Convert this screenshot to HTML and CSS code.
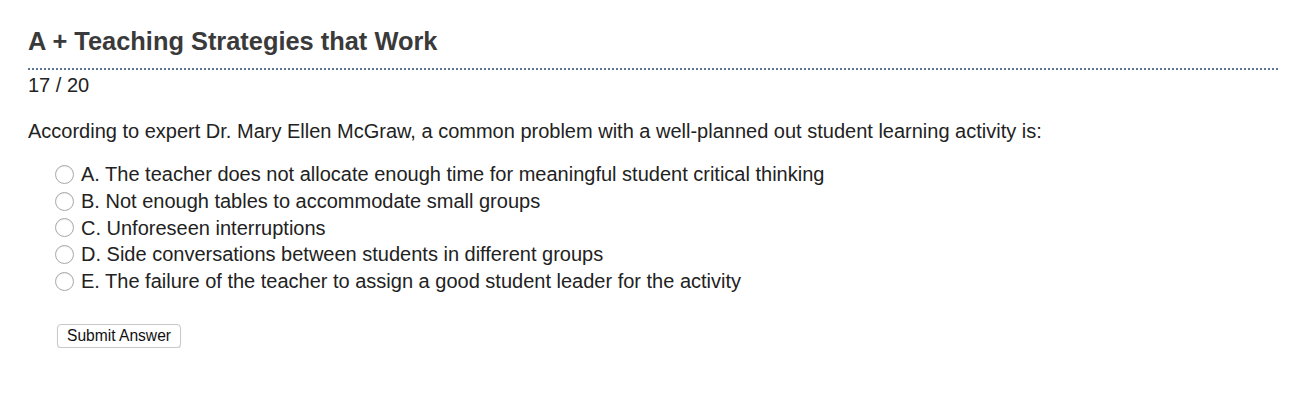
FILE: index.html
```html
<!DOCTYPE html>
<html lang="en">
<head>
    <meta charset="UTF-8">
    <title>A + Teaching Strategies that Work</title>
    <link rel="stylesheet" href="styles.css">
</head>
<body>
    <div class="quiz">
        <h1 class="quiz-title">A + Teaching Strategies that Work</h1>
        <div class="progress">17 / 20</div>
        <p class="question">According to expert Dr. Mary Ellen McGraw, a common problem with a well-planned out student learning activity is:</p>
        <ul class="choices">
            <li><label><span class="radio"></span>A. The teacher does not allocate enough time for meaningful student critical thinking</label></li>
            <li><label><span class="radio"></span>B. Not enough tables to accommodate small groups</label></li>
            <li><label><span class="radio"></span>C. Unforeseen interruptions</label></li>
            <li><label><span class="radio"></span>D. Side conversations between students in different groups</label></li>
            <li><label><span class="radio"></span>E. The failure of the teacher to assign a good student leader for the activity</label></li>
        </ul>
        <button class="submit-btn">Submit Answer</button>
    </div>
</body>
</html>
```

FILE: styles.css
```css
body {
    font-family: 'Liberation Sans', Arial, sans-serif;
    margin: 0;
    padding: 0;
    background: white;
    color: #222;
}
.quiz {
    padding: 26px 22px 0 28px;
}
.quiz-title {
    font-size: 25.4px;
    font-weight: bold;
    color: #3a3a3a;
    margin: 0;
    line-height: 30px;
    padding-bottom: 12px;
    border-bottom: 2px dotted #5a7894;
}
.progress {
    font-size: 20px;
    line-height: 24px;
    margin-top: 3px;
}
.question {
    font-size: 20px;
    line-height: 24px;
    margin: 22px 0 18px 0;
}
.choices {
    list-style: none;
    margin: 0;
    padding: 0 0 0 27px;
}
.choices li {
    font-size: 20px;
    line-height: 26.75px;
}
.choices li:first-child {
    margin-top: 2px;
}
.choices label {
    display: flex;
    align-items: center;
}
.radio {
    width: 17px;
    height: 17px;
    border: 1px solid #a8a8a8;
    border-radius: 50%;
    margin-right: 7px;
    box-shadow: inset 0 1px 1px rgba(0, 0, 0, 0.08);
}
.submit-btn {
    margin: 29px 0 0 29px;
    font-family: 'Liberation Sans', Arial, sans-serif;
    font-size: 15.6px;
    color: #111;
    background: white;
    border: 1px solid #c8c8c8;
    border-radius: 4px;
    padding: 2px 9px;
    height: 24px;
    box-shadow: 0 1px 1px rgba(0, 0, 0, 0.12);
}
```
